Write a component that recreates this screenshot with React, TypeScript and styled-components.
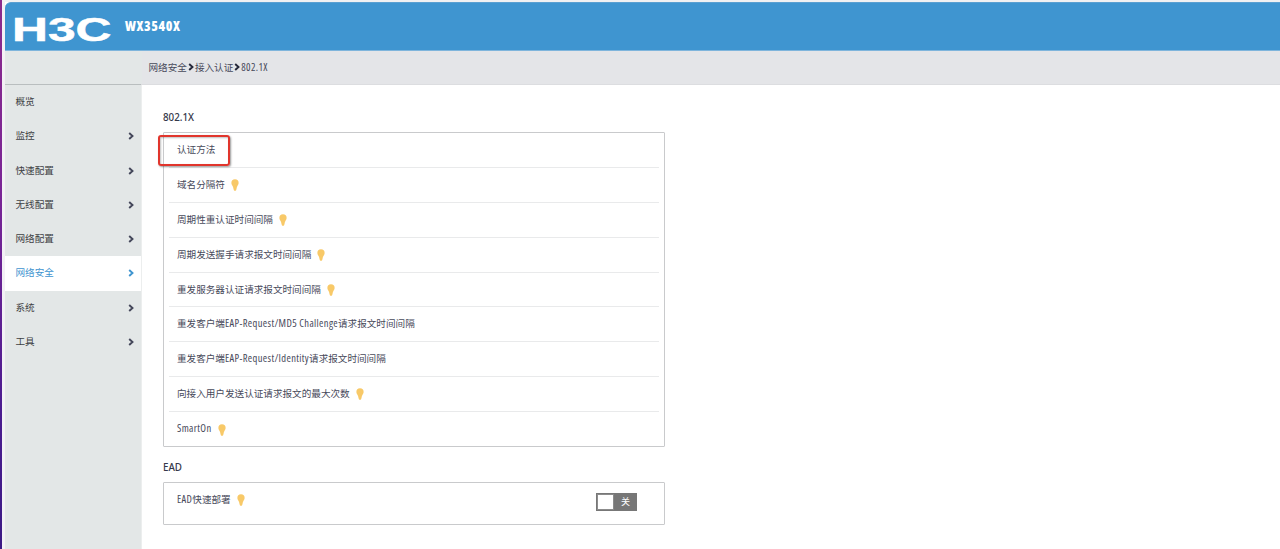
import React from "react";
import styled, { createGlobalStyle } from "styled-components";

const GlobalStyle = createGlobalStyle`
  * { box-sizing: border-box; }
  body {
    margin: 0;
    background: #fff;
    overflow: hidden;
    font-family: "Noto Sans", "Noto Sans CJK SC", sans-serif;
    font-size: 9.6px;
    color: #47495a;
  }
`;

const Page = styled.div`
  display: flex;
  height: 549px;
`;

const DesktopEdge = styled.div`
  flex: 0 0 5px;
  border-right: 3px solid #f3f1f5;
  background: linear-gradient(#8b2a8c, #7a2596 35%, #4b1c90 75%, #3c1a85);
  background-clip: padding-box;
`;

const Shell = styled.div`
  flex: 1;
  min-width: 0;
  display: flex;
  flex-direction: column;
  background: linear-gradient(#f1f1f2 2px, #fff 2px);
  padding-top: 2px;
`;

const Header = styled.header`
  flex: 0 0 49px;
  display: flex;
  align-items: center;
  padding-left: 8px;
  background: #3f95d0;
  border-top: 1px solid #5aa0d2;
  border-bottom: 1px solid #7fb5dc;
  border-top-left-radius: 6px;
`;

const Logo = styled.svg`
  display: block;
  width: 100px;
  height: 44px;
  margin-top: 2px;
  overflow: visible;
`;

const Model = styled.h1`
  margin: 0 0 2px 12px;
  color: #fff;
  font-family: "Open Sans", "Noto Sans", sans-serif;
  font-size: 13.4px;
  line-height: 18px;
  font-weight: 800;
  font-stretch: 83%;
  letter-spacing: 0.6px;
`;

const Crumbs = styled.nav`
  flex: 0 0 34px;
  display: flex;
  align-items: center;
  gap: 1px;
  padding: 0 0 1px 143.5px;
  background: linear-gradient(90deg, #e3e7e7 137px, #e4e5e8 137px);
  border-bottom: 1px solid #dcdde0;
  border-image: linear-gradient(90deg, #b9bebf 137px, #dcdde0 137px) 1;
`;

const Body = styled.div`
  flex: 1;
  display: flex;
`;

const Sidebar = styled.aside`
  flex: 0 0 137px;
  background: #e3e7e7;
  border-right: 1px solid #eceeee;
`;

const MenuItem = styled.div<{ $active?: boolean }>`
  display: flex;
  align-items: center;
  justify-content: space-between;
  height: 34.25px;
  padding: 0 7.5px 0 10.5px;
  color: ${(p) => (p.$active ? "#3f95d0" : "#3d4043")};
  background: ${(p) => (p.$active ? "#fff" : "transparent")};
`;

const MenuText = styled.span`
  padding-bottom: 2px;
`;

const Main = styled.main`
  width: 524px;
  padding: 24px 0 0 21px;
`;

const SectionTitle = styled.h2`
  margin: 0;
  height: 23px;
  font-size: 9.8px;
  font-weight: 500;
  line-height: 17px;
  color: #35384a;
`;

const Card = styled.section<{ $height: number }>`
  width: 502px;
  height: ${(p) => p.$height}px;
  padding: 0 5px;
  border: 1px solid #c9cacc;
  border-radius: 1px;
  margin-bottom: 12.4px;
`;

const Row = styled.div`
  position: relative;
  display: flex;
  align-items: center;
  height: 34.9px;
  padding: 0 22px 0 8px;
  border-bottom: 1px solid #e9eaeb;
  &:last-child { border-bottom: 0; }
`;

const Label = styled.span`
  white-space: nowrap;
  padding-bottom: 2px;
`;

const Latin = styled.span`
  font-family: "Open Sans", "Noto Sans", sans-serif;
  font-size: 10.5px;
  font-weight: 500;
  font-stretch: 83%;
  line-height: 1;
  letter-spacing: 0.36px;
`;

const Highlight = styled.div`
  position: absolute;
  left: -11px;
  top: 2px;
  width: 72px;
  height: 31px;
  border: 2px solid #e1352c;
  border-radius: 3px;
  box-shadow: 1px 1px 2px rgba(0, 0, 0, 0.4), inset 1px 1px 2px rgba(0, 0, 0, 0.25);
`;

const BulbIcon = styled.svg`
  width: 8px;
  height: 12px;
  margin-left: 6px;
  flex: none;
`;

const ArrowIcon = styled.svg`
  width: 6px;
  height: 8px;
  flex: none;
`;

const Toggle = styled.div`
  display: flex;
  width: 41px;
  height: 18px;
  margin: 3px 0 0 auto;
  border: 1px solid #777;
  background: #777;
  color: #fff;
  font-size: 9px;
`;

const Knob = styled.span`
  width: 17px;
  border: 1px solid #8c8c8c;
  background: #fff;
`;

const ToggleText = styled.span`
  flex: 1;
  padding-left: 1px;
  text-align: center;
  line-height: 16px;
`;

const Bulb = () => (
  <BulbIcon viewBox="0 0 8 12">
    <path d="M4 .3A3.6 3.6 0 0 0 .4 4c0 1.5.8 2.3 1.3 3.2.5.9.6 1.7.8 2.7L3 11.4q1 .7 2 0l.5-1.5c.2-1 .3-1.8.8-2.7.5-.9 1.3-1.7 1.3-3.2A3.6 3.6 0 0 0 4 .3Z" fill="#f8c968" />
  </BulbIcon>
);

const Arrow = ({ color = "#44475a" }: { color?: string }) => (
  <ArrowIcon viewBox="0 0 6 8">
    <path d="M1.2 1 4.5 4 1.2 7" fill="none" stroke={color} strokeWidth="1.9" />
  </ArrowIcon>
);

const menu = ["概览", "监控", "快速配置", "无线配置", "网络配置", "网络安全", "系统", "工具"];

const settings: { label: React.ReactNode; tip?: boolean; marked?: boolean }[] = [
  { label: "认证方法", marked: true },
  { label: "域名分隔符", tip: true },
  { label: "周期性重认证时间间隔", tip: true },
  { label: "周期发送握手请求报文时间间隔", tip: true },
  { label: "重发服务器认证请求报文时间间隔", tip: true },
  { label: <>重发客户端<Latin>EAP-Request/MD5 Challenge</Latin>请求报文时间间隔</> },
  { label: <>重发客户端<Latin>EAP-Request/Identity</Latin>请求报文时间间隔</> },
  { label: "向接入用户发送认证请求报文的最大次数", tip: true },
  { label: <Latin>SmartOn</Latin>, tip: true },
];

export default function App() {
  return (
    <>
      <GlobalStyle />
      <Page>
        <DesktopEdge />
        <Shell>
          <Header>
            <Logo viewBox="0 0 100 44">
              <text x="-1" y="35" fill="#fff" stroke="#fff" strokeWidth="0.5" fontFamily="Liberation Sans" fontWeight="700" fontSize="34" textLength="99.5" lengthAdjust="spacingAndGlyphs">H3C</text>
            </Logo>
            <Model>WX3540X</Model>
          </Header>
          <Crumbs>
            <span>网络安全</span>
            <Arrow color="#25283a" />
            <span>接入认证</span>
            <Arrow color="#25283a" />
            <Latin>802.1X</Latin>
          </Crumbs>
          <Body>
            <Sidebar>
              {menu.map((name) => {
                const active = name === "网络安全";
                return (
                  <MenuItem key={name} $active={active}>
                    <MenuText>{name}</MenuText>
                    {name !== "概览" && <Arrow color={active ? "#3f95d0" : undefined} />}
                  </MenuItem>
                );
              })}
            </Sidebar>
            <Main>
              <SectionTitle>802.1X</SectionTitle>
              <Card $height={314.5}>
                {settings.map((item, i) => (
                  <Row key={i}>
                    <Label>{item.label}</Label>
                    {item.tip && <Bulb />}
                    {item.marked && <Highlight />}
                  </Row>
                ))}
              </Card>
              <SectionTitle>EAD</SectionTitle>
              <Card $height={43}>
                <Row>
                  <Label><Latin>EAD</Latin>快速部署</Label>
                  <Bulb />
                  <Toggle>
                    <Knob />
                    <ToggleText>关</ToggleText>
                  </Toggle>
                </Row>
              </Card>
            </Main>
          </Body>
        </Shell>
      </Page>
    </>
  );
}
